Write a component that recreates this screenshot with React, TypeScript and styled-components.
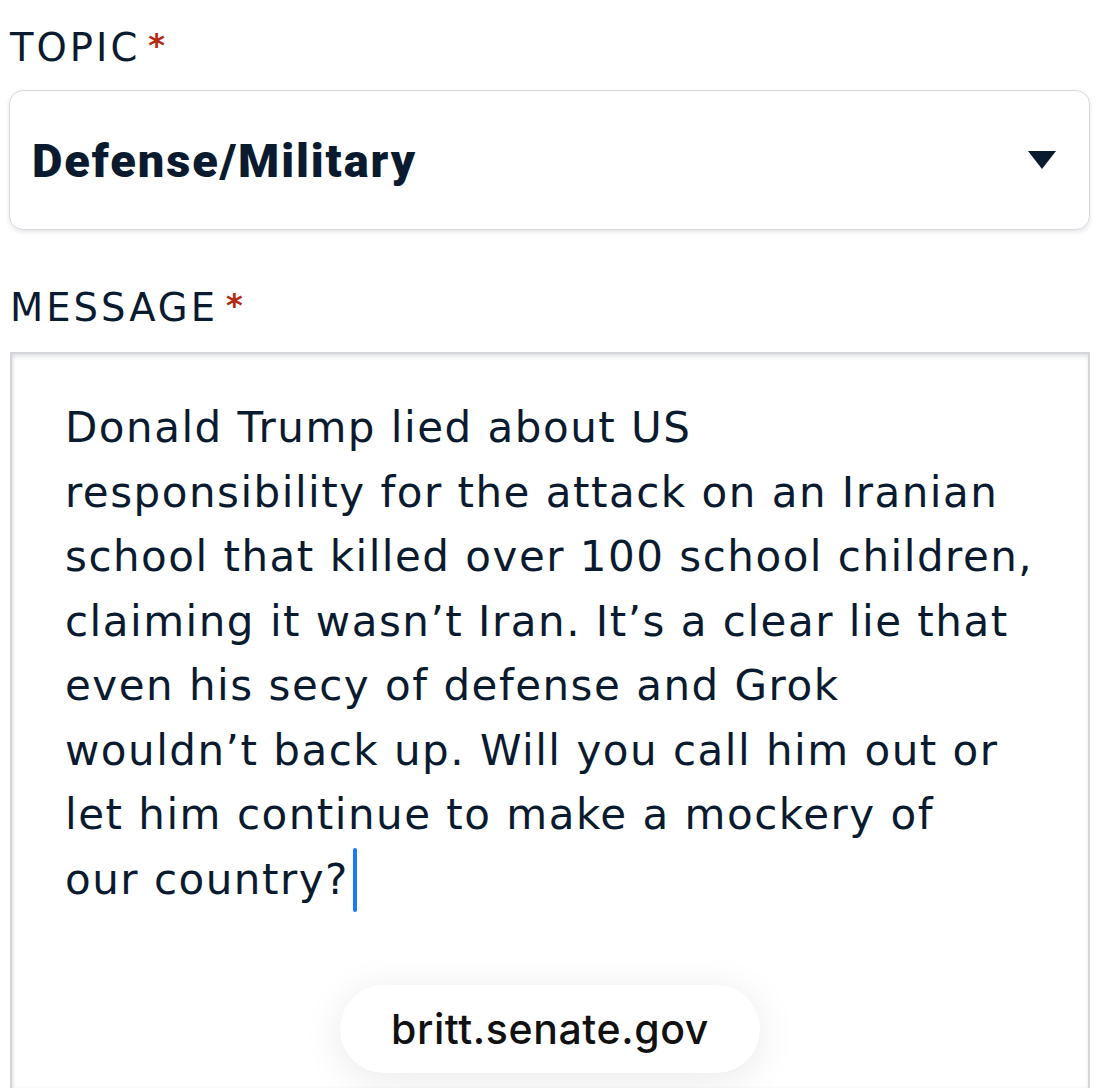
import React from 'react';
import styled, {createGlobalStyle} from 'styled-components';

const ink = '#0b1b2f';

const GlobalStyle = createGlobalStyle`
  html, body {
    margin: 0;
    padding: 0;
    background: #ffffff;
  }
  body {
    font-family: "DejaVu Sans", "Noto Sans", sans-serif;
    color: ${ink};
    overflow: hidden;
  }
`

const lines = [
    'Donald Trump lied about US',
    'responsibility for the attack on an Iranian',
    'school that killed over 100 school children,',
    'claiming it wasn\u2019t Iran. It\u2019s a clear lie that',
    'even his secy of defense and Grok',
    'wouldn\u2019t back up. Will you call him out or',
    'let him continue to make a mockery of',
    'our country?',
];

export default function App() {
    return (
        <>
            <GlobalStyle/>
            <Page>
                <Label>TOPIC<Required>*</Required></Label>
                <Select>
                    <SelectValue>Defense/Military</SelectValue>
                    <Caret viewBox="0 0 30 20" aria-hidden>
                        <path d="M1 1 L29 1 L15 19 Z" fill={ink}/>
                    </Caret>
                </Select>
                <Label $top={58}>MESSAGE<Required>*</Required></Label>
                <MessageBox>
                    <MessageText>
                        {lines.map((line, i) => (
                            <Line key={i}>
                                {line}
                                {i === lines.length - 1 && <Cursor/>}
                            </Line>
                        ))}
                    </MessageText>
                </MessageBox>
                <UrlPill>britt.senate.gov</UrlPill>
            </Page>
        </>
    );
}

const Page = styled.div`
  position: relative;
  width: 1100px;
  height: 1088px;
  overflow: hidden;
  padding: 28px 10px 0 10px;
  box-sizing: border-box;
  display: flex;
  flex-direction: column;
`
const Label = styled.div<{ $top?: number }>`
  margin-top: ${p => p.$top ?? 0}px;
  font-size: 38.5px;
  letter-spacing: 3px;
  line-height: 40px;
  color: ${ink};
  display: flex;
  align-items: flex-start;
`
const Required = styled.span`
  color: #b52a12;
  font-size: 32px;
  font-weight: 700;
  margin-left: 8px;
  line-height: 34px;
`
const Select = styled.div`
  margin-top: 22px;
  height: 140px;
  box-sizing: border-box;
  border: 1.5px solid #d6d8dc;
  border-radius: 14px;
  box-shadow: 0 2px 4px rgba(20, 30, 50, 0.12);
  display: flex;
  align-items: center;
  justify-content: space-between;
  padding: 0 32px 0 22px;
  margin-left: -1px;
`
const SelectValue = styled.div`
  font-family: Roboto, "Liberation Sans", sans-serif;
  font-size: 47px;
  font-weight: 900;
  letter-spacing: 1.9px;
  color: ${ink};
`
const Caret = styled.svg`
  width: 30px;
  height: 20px;
`
const MessageBox = styled.div`
  margin-top: 24px;
  flex: 1;
  border: 2px solid #d3d5d9;
  border-bottom: none;
  box-shadow: inset 0 3px 4px rgba(20, 30, 50, 0.10), inset 2px 0 3px rgba(20, 30, 50, 0.06);
  padding: 42px 30px 0 53px;
`
const MessageText = styled.div`
  font-size: 42px;
  line-height: 64.5px;
  letter-spacing: 1.5px;
  color: ${ink};
`
const Line = styled.div`
  white-space: nowrap;
`
const Cursor = styled.span`
  display: inline-block;
  width: 4px;
  height: 64px;
  margin-left: 4px;
  border-radius: 2px;
  background: #1a7cf2;
  vertical-align: -18px;
`
const UrlPill = styled.div`
  position: absolute;
  left: 340px;
  top: 985px;
  width: 420px;
  height: 88px;
  border-radius: 44px;
  background: #ffffff;
  box-shadow: 0 6px 40px rgba(0, 0, 0, 0.09);
  display: flex;
  align-items: center;
  justify-content: center;
  font-family: Inter, "Liberation Sans", sans-serif;
  font-size: 41px;
  font-weight: 500;
  color: #111111;
  letter-spacing: 0.6px;
`
